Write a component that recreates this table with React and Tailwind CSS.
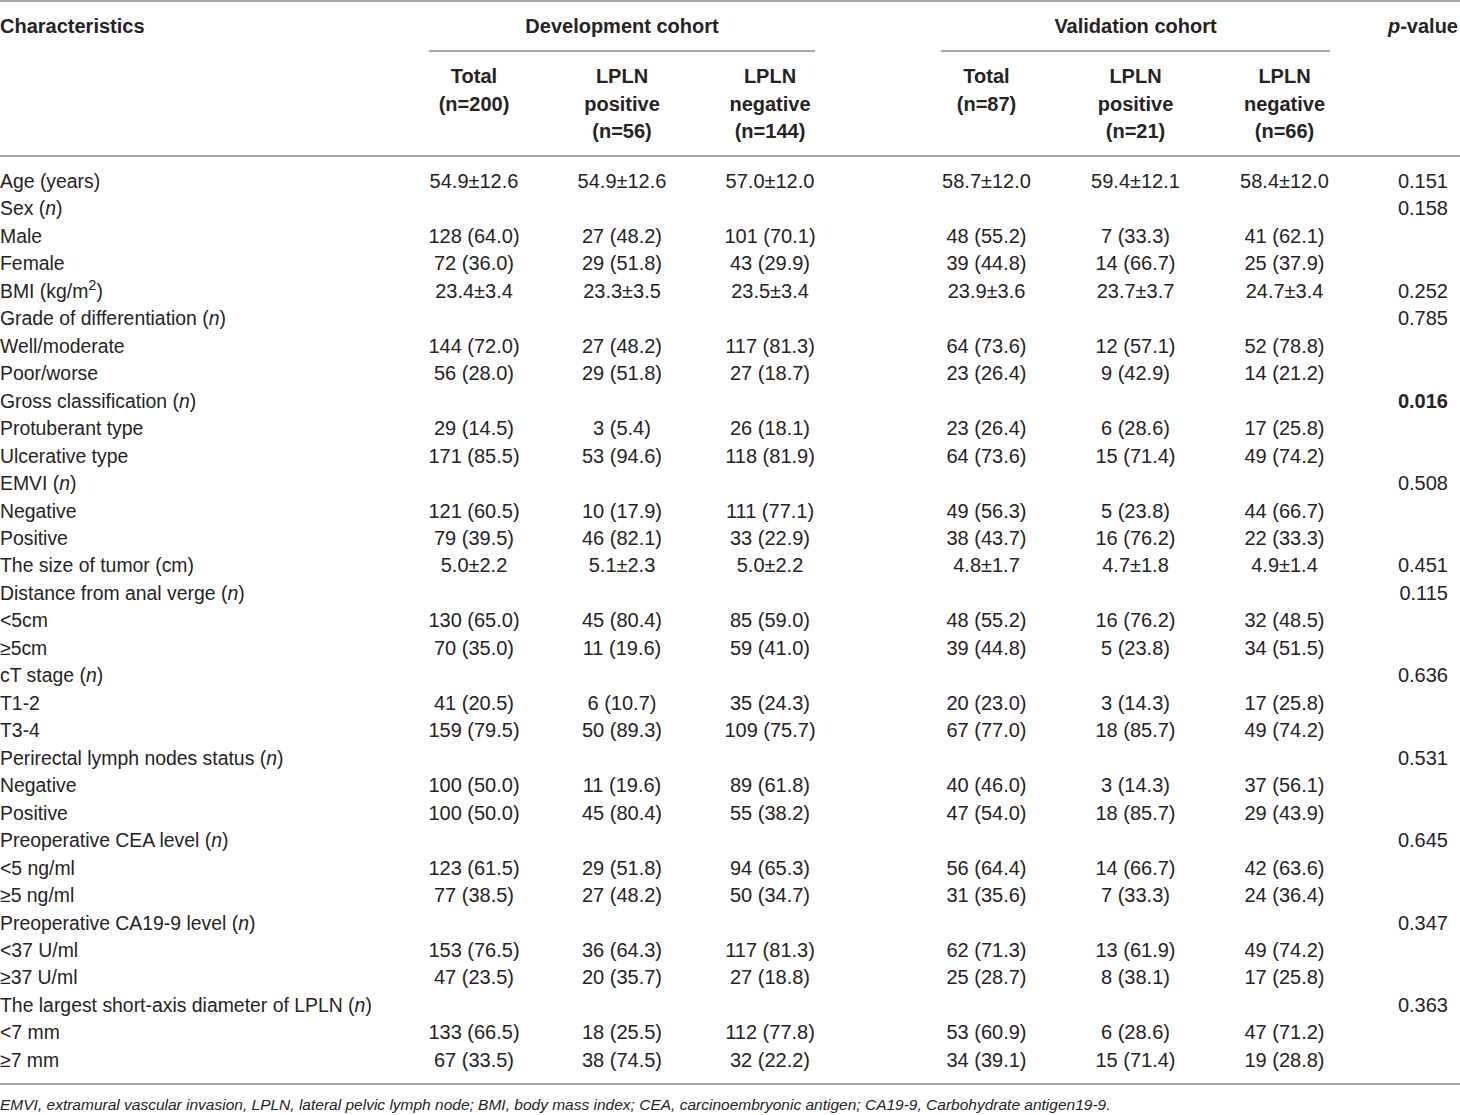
const rows = [
  { label: "Age (years)", v: ["54.9±12.6", "54.9±12.6", "57.0±12.0", "58.7±12.0", "59.4±12.1", "58.4±12.0"], p: "0.151" },
  { label: "Sex", n: true, p: "0.158" },
  { label: "Male", v: ["128 (64.0)", "27 (48.2)", "101 (70.1)", "48 (55.2)", "7 (33.3)", "41 (62.1)"] },
  { label: "Female", v: ["72 (36.0)", "29 (51.8)", "43 (29.9)", "39 (44.8)", "14 (66.7)", "25 (37.9)"] },
  { label: "BMI", bmi: true, v: ["23.4±3.4", "23.3±3.5", "23.5±3.4", "23.9±3.6", "23.7±3.7", "24.7±3.4"], p: "0.252" },
  { label: "Grade of differentiation", n: true, p: "0.785" },
  { label: "Well/moderate", v: ["144 (72.0)", "27 (48.2)", "117 (81.3)", "64 (73.6)", "12 (57.1)", "52 (78.8)"] },
  { label: "Poor/worse", v: ["56 (28.0)", "29 (51.8)", "27 (18.7)", "23 (26.4)", "9 (42.9)", "14 (21.2)"] },
  { label: "Gross classification", n: true, p: "0.016", bold: true },
  { label: "Protuberant type", v: ["29 (14.5)", "3 (5.4)", "26 (18.1)", "23 (26.4)", "6 (28.6)", "17 (25.8)"] },
  { label: "Ulcerative type", v: ["171 (85.5)", "53 (94.6)", "118 (81.9)", "64 (73.6)", "15 (71.4)", "49 (74.2)"] },
  { label: "EMVI", n: true, p: "0.508" },
  { label: "Negative", v: ["121 (60.5)", "10 (17.9)", "111 (77.1)", "49 (56.3)", "5 (23.8)", "44 (66.7)"] },
  { label: "Positive", v: ["79 (39.5)", "46 (82.1)", "33 (22.9)", "38 (43.7)", "16 (76.2)", "22 (33.3)"] },
  { label: "The size of tumor (cm)", v: ["5.0±2.2", "5.1±2.3", "5.0±2.2", "4.8±1.7", "4.7±1.8", "4.9±1.4"], p: "0.451" },
  { label: "Distance from anal verge", n: true, p: "0.115" },
  { label: "<5cm", v: ["130 (65.0)", "45 (80.4)", "85 (59.0)", "48 (55.2)", "16 (76.2)", "32 (48.5)"] },
  { label: "≥5cm", v: ["70 (35.0)", "11 (19.6)", "59 (41.0)", "39 (44.8)", "5 (23.8)", "34 (51.5)"] },
  { label: "cT stage", n: true, p: "0.636" },
  { label: "T1-2", v: ["41 (20.5)", "6 (10.7)", "35 (24.3)", "20 (23.0)", "3 (14.3)", "17 (25.8)"] },
  { label: "T3-4", v: ["159 (79.5)", "50 (89.3)", "109 (75.7)", "67 (77.0)", "18 (85.7)", "49 (74.2)"] },
  { label: "Perirectal lymph nodes status", n: true, p: "0.531" },
  { label: "Negative", v: ["100 (50.0)", "11 (19.6)", "89 (61.8)", "40 (46.0)", "3 (14.3)", "37 (56.1)"] },
  { label: "Positive", v: ["100 (50.0)", "45 (80.4)", "55 (38.2)", "47 (54.0)", "18 (85.7)", "29 (43.9)"] },
  { label: "Preoperative CEA level", n: true, p: "0.645" },
  { label: "<5 ng/ml", v: ["123 (61.5)", "29 (51.8)", "94 (65.3)", "56 (64.4)", "14 (66.7)", "42 (63.6)"] },
  { label: "≥5 ng/ml", v: ["77 (38.5)", "27 (48.2)", "50 (34.7)", "31 (35.6)", "7 (33.3)", "24 (36.4)"] },
  { label: "Preoperative CA19-9 level", n: true, p: "0.347" },
  { label: "<37 U/ml", v: ["153 (76.5)", "36 (64.3)", "117 (81.3)", "62 (71.3)", "13 (61.9)", "49 (74.2)"] },
  { label: "≥37 U/ml", v: ["47 (23.5)", "20 (35.7)", "27 (18.8)", "25 (28.7)", "8 (38.1)", "17 (25.8)"] },
  { label: "The largest short-axis diameter of LPLN", n: true, p: "0.363" },
  { label: "<7 mm", v: ["133 (66.5)", "18 (25.5)", "112 (77.8)", "53 (60.9)", "6 (28.6)", "47 (71.2)"] },
  { label: "≥7 mm", v: ["67 (33.5)", "38 (74.5)", "32 (22.2)", "34 (39.1)", "15 (71.4)", "19 (28.8)"] },
];

const cols = "grid grid-cols-[400px_148px_148px_148px_68px_149px_149px_149px_101px]";

function SubHead({ lines }) {
  return (
    <div className="pt-[11px] pb-[9px] text-center font-bold">
      {lines.map((l) => (
        <div key={l}>{l}</div>
      ))}
    </div>
  );
}

function Label({ row }) {
  if (row.bmi)
    return (
      <div className="text-[19.4px]">
        BMI (kg/m<sup>2</sup>)
      </div>
    );
  return (
    <div className="whitespace-nowrap text-[19.4px]">
      {row.label}
      {row.n && (
        <>
          {" "}(<i>n</i>)
        </>
      )}
    </div>
  );
}

export default function App() {
  const vals = (r) => r.v || ["", "", "", "", "", ""];

  return (
    <div className="w-[1460px] h-[1115px] bg-white text-[#262324] text-[20px] leading-[27.47px] font-['Liberation_Sans',Arial,sans-serif]">
      {/* Header */}
      <div className="border-t-2 border-[#a9a9a9]">
        <div className={`${cols} pt-[11px]`}>
          <div className="font-bold row-span-2">Characteristics</div>
          <div className="col-span-3 text-center font-bold">
            <div>Development cohort</div>
            <div className="mx-[29px] mt-[10px] border-b-2 border-[#a9a9a9]" />
          </div>
          <div />
          <div className="col-span-3 text-center font-bold">
            <div>Validation cohort</div>
            <div className="mx-[29px] mt-[10px] border-b-2 border-[#a9a9a9]" />
          </div>
          <div className="row-span-2 text-right pr-[2px] font-bold">
            <i>p</i>-value
          </div>
          <div className="col-start-2">
            <SubHead lines={["Total", "(n=200)"]} />
          </div>
          <SubHead lines={["LPLN", "positive", "(n=56)"]} />
          <SubHead lines={["LPLN", "negative", "(n=144)"]} />
          <div />
          <SubHead lines={["Total", "(n=87)"]} />
          <SubHead lines={["LPLN", "positive", "(n=21)"]} />
          <SubHead lines={["LPLN", "negative", "(n=66)"]} />
        </div>
      </div>

      {/* Body */}
      <div className="border-t-2 border-b-2 border-[#a9a9a9] pt-[11px] pb-[9px]">
        {rows.map((r, i) => (
          <div key={i} className={cols}>
            <Label row={r} />
            {vals(r).slice(0, 3).map((v, j) => (
              <div key={j} className="text-center whitespace-nowrap">{v}</div>
            ))}
            <div />
            {vals(r).slice(3).map((v, j) => (
              <div key={j} className="text-center whitespace-nowrap">{v}</div>
            ))}
            <div className={`text-right pr-[12px] ${r.bold ? "font-bold" : ""}`}>{r.p || ""}</div>
          </div>
        ))}
      </div>

      {/* Footnote */}
      <div className="pt-[9px] text-[15.5px] italic leading-[22px]">
        EMVI, extramural vascular invasion, LPLN, lateral pelvic lymph node; BMI, body mass index; CEA, carcinoembryonic antigen; CA19-9, Carbohydrate antigen19-9.
      </div>
    </div>
  );
}
